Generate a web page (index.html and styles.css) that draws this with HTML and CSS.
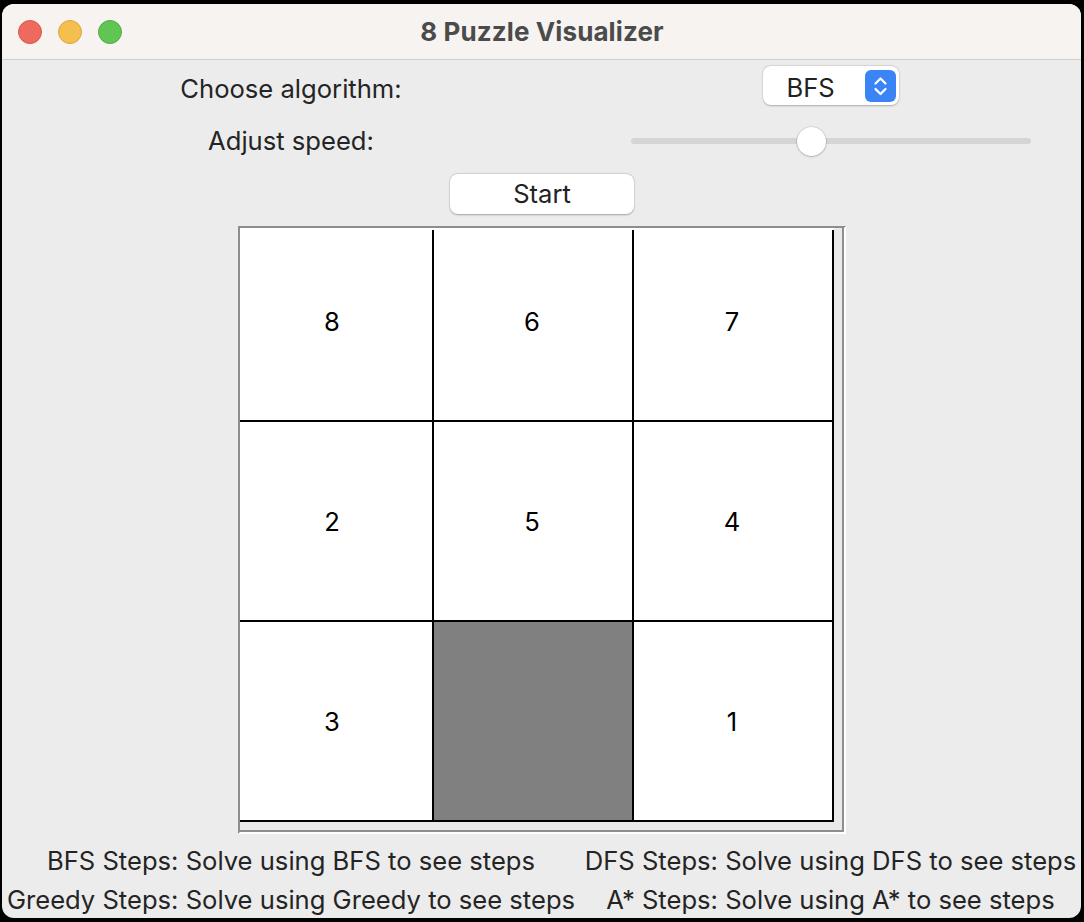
FILE: index.html
```html
<!DOCTYPE html>
<html>
<head>
<meta charset="utf-8">
<title>8 Puzzle Visualizer</title>
<link rel="stylesheet" href="styles.css">
</head>
<body>
<div class="window">
  <div class="titlebar">
    <div class="lights">
      <span class="light red"></span>
      <span class="light yellow"></span>
      <span class="light green"></span>
    </div>
    <div class="title">8 Puzzle Visualizer</div>
    <div class="spacer"></div>
  </div>
  <div class="content">
    <div class="row row-algo">
      <div class="col"><span class="label">Choose algorithm:</span></div>
      <div class="col">
        <div class="select">
          <span class="select-text">BFS</span>
          <span class="stepper">
            <svg width="31" height="32" viewBox="0 0 31 32">
              <path d="M10.5 13.5 L15.5 8.5 L20.5 13.5" fill="none" stroke="#fff" stroke-width="2.2" stroke-linecap="round" stroke-linejoin="round"/>
              <path d="M10.5 19 L15.5 24 L20.5 19" fill="none" stroke="#fff" stroke-width="2.2" stroke-linecap="round" stroke-linejoin="round"/>
            </svg>
          </span>
        </div>
      </div>
    </div>
    <div class="row row-speed">
      <div class="col"><span class="label">Adjust speed:</span></div>
      <div class="col">
        <div class="slider">
          <div class="track"></div>
          <div class="knob"></div>
        </div>
      </div>
    </div>
    <div class="row-start">
      <button class="btn">Start</button>
    </div>
    <div class="board-wrap">
      <div class="frame">
        <div class="canvas">
          <div class="grid">
            <div class="cell"><span class="num">8</span></div>
            <div class="cell"><span class="num">6</span></div>
            <div class="cell"><span class="num">7</span></div>
            <div class="cell"><span class="num">2</span></div>
            <div class="cell"><span class="num">5</span></div>
            <div class="cell"><span class="num">4</span></div>
            <div class="cell"><span class="num">3</span></div>
            <div class="cell empty"></div>
            <div class="cell"><span class="num">1</span></div>
          </div>
        </div>
      </div>
    </div>
    <div class="results">
      <div class="res">BFS Steps: Solve using BFS to see steps</div>
      <div class="res">DFS Steps: Solve using DFS to see steps</div>
      <div class="res">Greedy Steps: Solve using Greedy to see steps</div>
      <div class="res">A* Steps: Solve using A* to see steps</div>
    </div>
  </div>
</div>
</body>
</html>
```

FILE: styles.css
```css
* { box-sizing: border-box; }

html, body {
  margin: 0;
  padding: 0;
  background: #000;
  width: 1084px;
  height: 922px;
  overflow: hidden;
}

body {
  font-family: "Inter", "Liberation Sans", sans-serif;
  color: #222;
  padding: 4px 0 0 2px;
}

.window {
  width: 1079px;
  height: 914px;
  border-radius: 12px;
  overflow: hidden;
  background: #ececec;
  display: flex;
  flex-direction: column;
}

.titlebar {
  height: 56px;
  flex: 0 0 56px;
  background: #f6f3f1;
  border-bottom: 1px solid #cfcdcb;
  display: grid;
  grid-template-columns: 1fr auto 1fr;
  align-items: center;
}

.lights {
  display: flex;
  gap: 16px;
  padding-left: 16px;
}

.light {
  width: 24px;
  height: 24px;
  border-radius: 50%;
  display: block;
}
.light.red { background: #ee6a5f; border: 1px solid #d9574c; }
.light.yellow { background: #f5bf4f; border: 1px solid #dba742; }
.light.green { background: #61c554; border: 1px solid #52ad45; }

.title {
  font-weight: 700;
  font-size: 26px;
  color: #4b4b4b;
  letter-spacing: 0.1px;
  padding-left: 1px;
}

.content {
  display: flex;
  flex-direction: column;
}

.row {
  display: grid;
  grid-template-columns: 578px 501px;
  align-items: center;
}

.col {
  display: flex;
  justify-content: center;
  align-items: center;
}

.label {
  font-size: 25.6px;
  color: #242424;
}

.row-algo {
  margin-top: 6px;
  height: 39px;
}
.row-algo .label { position: relative; top: 3px; }

.select {
  width: 136px;
  height: 39px;
  background: #fff;
  border-radius: 8px;
  box-shadow: 0 0.5px 2px rgba(0,0,0,0.25), 0 0 0 0.5px rgba(0,0,0,0.06);
  display: flex;
  align-items: center;
  justify-content: space-between;
  padding: 0 3px 0 24px;
}

.select-text {
  font-size: 25.6px;
  color: #222;
  padding-top: 3px;
}

.stepper {
  width: 31px;
  height: 32px;
  border-radius: 6px;
  background: #3a84f6;
  display: flex;
}

.row-speed {
  margin-top: 20px;
  height: 28px;
}

.slider {
  width: 400px;
  height: 28px;
  position: relative;
  display: flex;
  align-items: center;
}

.track {
  width: 400px;
  height: 6px;
  border-radius: 3px;
  background: #d5d5d5;
}

.knob {
  position: absolute;
  left: 166px;
  top: 0;
  width: 29px;
  height: 29px;
  border-radius: 50%;
  background: #fff;
  box-shadow: 0 0.5px 2px rgba(0,0,0,0.35), 0 0 0 0.5px rgba(0,0,0,0.08);
}

.row-start {
  margin-top: 21px;
  display: flex;
  justify-content: center;
  height: 40px;
  padding-left: 1px;
}

.btn {
  width: 184px;
  height: 40px;
  border: none;
  border-radius: 8px;
  background: #fff;
  box-shadow: 0 0.5px 2px rgba(0,0,0,0.3), 0 0 0 0.5px rgba(0,0,0,0.06);
  font-family: inherit;
  font-size: 25.6px;
  color: #222;
  padding: 0 0 2px 0;
}

.board-wrap {
  margin-top: 12px;
  display: flex;
  justify-content: center;
  padding-left: 1px;
}

.frame {
  width: 608px;
  height: 608px;
  border-top: 2px solid #8e8e8e;
  border-left: 2px solid #8e8e8e;
  border-right: 2px solid #ffffff;
  border-bottom: 2px solid #ffffff;
}

.canvas {
  width: 604px;
  height: 604px;
  border-right: 2px solid #8e8e8e;
  border-bottom: 2px solid #8e8e8e;
  background: #e9e9e9;
}

.grid {
  width: 594px;
  height: 594px;
  background: #000;
  border-top: 2px solid #fff;
  padding: 0 2px 2px 0;
  display: grid;
  grid-template-columns: 192px 198px 198px;
  grid-template-rows: 190px 198px 198px;
  gap: 2px;
}

.cell {
  background: #fff;
  display: flex;
  justify-content: flex-end;
  align-items: flex-end;
}

.cell.empty { background: #808080; }

.num {
  flex: 0 0 200px;
  width: 200px;
  height: 200px;
  display: flex;
  align-items: center;
  justify-content: center;
  font-size: 25.6px;
  color: #000;
  padding-top: 2px;
}

.results {
  margin-top: 7px;
  display: grid;
  grid-template-columns: 578px 501px;
}

.res {
  text-align: center;
  font-size: 25.6px;
  line-height: 39px;
  white-space: nowrap;
  color: #242424;
}
```
